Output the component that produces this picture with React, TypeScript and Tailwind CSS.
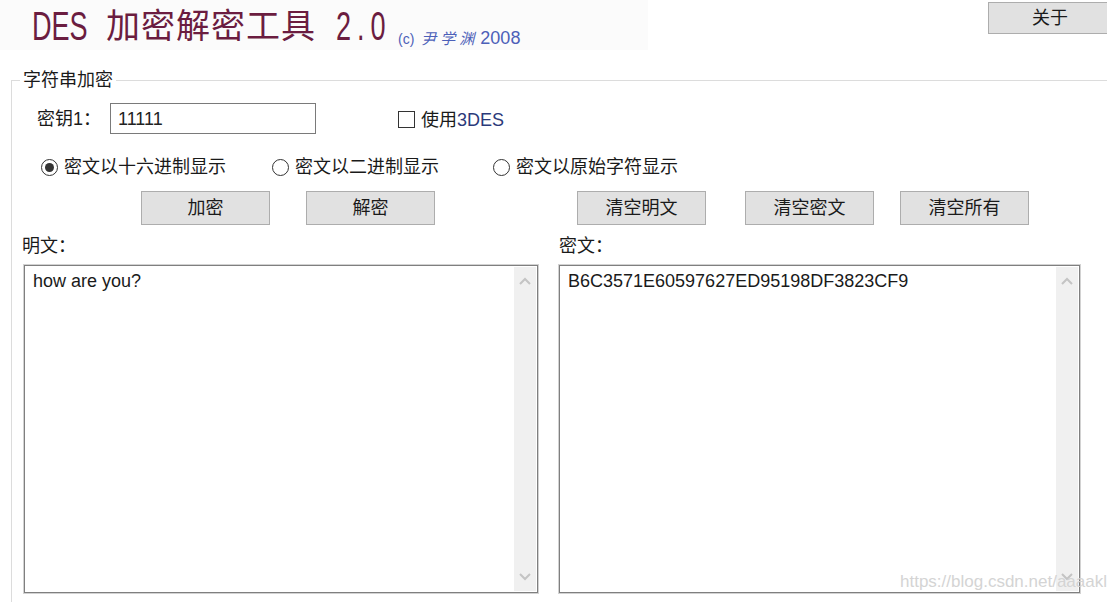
import React from "react";

const F = '"Liberation Sans", "Noto Sans CJK SC", sans-serif';

function Btn({ children, className = "" }: { children: React.ReactNode; className?: string }) {
  return (
    <div
      className={
        "h-[34px] w-[129px] flex items-center justify-center border border-[#adadad] bg-[#e1e1e1] text-[18px] text-[#1a1a1a] " +
        className
      }
    >
      {children}
    </div>
  );
}

function Radio({ checked, label, className = "" }: { checked?: boolean; label: string; className?: string }) {
  return (
    <div className={"flex items-center " + className}>
      <span className="w-[17px] h-[17px] shrink-0 rounded-full border border-[#333] bg-white flex items-center justify-center">
        {checked && <span className="w-[9px] h-[9px] rounded-full bg-[#333]" />}
      </span>
      <span className="ml-[6px] text-[18px] text-[#1a1a1a]">{label}</span>
    </div>
  );
}

function Chevron({ up }: { up?: boolean }) {
  return (
    <svg width="12" height="8" viewBox="0 0 12 8">
      <path
        d={up ? "M1 7 L6 2 L11 7" : "M1 1 L6 6 L11 1"}
        fill="none"
        stroke="#c4c4c4"
        strokeWidth="2"
      />
    </svg>
  );
}

function TextBox({ text, className = "" }: { text: string; className?: string }) {
  return (
    <div
      className={
        "h-[328px] border border-[#7f7f7f] outline outline-1 outline-[#d2d2d2] bg-white flex " + className
      }
    >
      <div className="flex-1 pl-[8px] pt-[3px] text-[18px] leading-[24px] text-[#1a1a1a]">{text}</div>
      <div className="w-[22px] mr-[1px] my-[1px] bg-[#f0f0f0] flex flex-col items-center justify-between py-[10px]">
        <Chevron up />
        <Chevron />
      </div>
    </div>
  );
}

export default function App() {
  return (
    <div className="w-[1107px] h-[602px] bg-white relative overflow-hidden" style={{ fontFamily: F }}>
      {/* header */}
      <div className="flex h-[50px]">
        <div className="w-[648px] h-[50px] bg-[#fbfbfb] flex items-end pl-[32px] pb-[4px]">
          <span className="inline-block w-[56px] h-[44px] relative shrink-0">
            <span
              className="absolute left-0 bottom-[-4px] origin-left scale-x-[0.66] text-[41px] leading-[48px] text-[#6b1d40] whitespace-nowrap"
              style={{ fontFamily: '"Liberation Sans", sans-serif' }}
            >
              DES
            </span>
          </span>
          <span
            className="ml-[18px] text-[34px] leading-[44px] tracking-[1px] text-[#6b1d40] whitespace-nowrap"
            style={{ fontFamily: '"Noto Sans CJK SC", sans-serif' }}
          >
            加密解密工具
          </span>
          <span className="inline-block w-[62px] h-[44px] relative ml-[20px] shrink-0">
            <span
              className="absolute left-0 bottom-[-4px] origin-left scale-x-[0.66] text-[41px] leading-[48px] text-[#6b1d40] whitespace-nowrap tracking-[9px]"
              style={{ fontFamily: '"Liberation Sans", sans-serif' }}
            >
              2.0
            </span>
          </span>
          <span className="mb-[-6px] text-[#4c60b8] whitespace-nowrap flex items-baseline">
            <span className="text-[14px]">(c)</span>
            <span
              className="ml-[7px] text-[15px] italic tracking-[4px]"
              style={{ fontFamily: '"Noto Sans CJK SC", sans-serif' }}
            >
              尹学渊
            </span>
            <span className="ml-[2px] text-[18px]">2008</span>
          </span>
        </div>
        <div className="ml-auto mt-[2px] mr-[-5px] h-[32px] w-[124px] border border-[#adadad] bg-[#e1e1e1] flex items-center justify-center text-[18px] text-[#1a1a1a]">
          关于
        </div>
      </div>

      {/* group box */}
      <fieldset className="ml-[11px] mt-[18px] border-t border-l border-[#dcdcdc] h-[560px] min-w-0">
        <legend className="ml-[8px] px-[3px] text-[18px] leading-[24px] text-[#1a1a1a]">字符串加密</legend>

        {/* row 1 */}
        <div className="flex items-center h-[31px] mt-[11px] pl-[25px]">
          <span className="w-[73px] pt-[2px] text-[18px] text-[#1a1a1a]">密钥1：</span>
          <div className="w-[206px] h-[31px] border border-[#7a7a7a] bg-white flex items-center pl-[7px] pt-[2px] text-[18px] text-[#222]">
            11111
          </div>
          <span className="ml-[82px] mt-[2px] w-[17px] h-[17px] border border-[#333] bg-white" />
          <span className="ml-[6px] pt-[4px] text-[18px] text-[#1a1a1a]">
            使用<span className="text-[#2b3a7a]">3DES</span>
          </span>
        </div>

        {/* row 2 */}
        <div className="flex items-center h-[24px] mt-[21px] pl-[29px]">
          <Radio checked label="密文以十六进制显示" className="w-[231px]" />
          <Radio label="密文以二进制显示" className="w-[221px]" />
          <Radio label="密文以原始字符显示" />
        </div>

        {/* row 3 */}
        <div className="flex h-[34px] mt-[12px] pl-[129px]">
          <Btn>加密</Btn>
          <Btn className="ml-[36px]">解密</Btn>
          <Btn className="ml-[142px]">清空明文</Btn>
          <Btn className="ml-[39px]">清空密文</Btn>
          <Btn className="ml-[26px]">清空所有</Btn>
        </div>

        {/* row 4 labels */}
        <div className="flex h-[24px] mt-[9px] text-[18px] leading-[24px] text-[#1a1a1a]">
          <span className="ml-[10px] w-[537px]">明文：</span>
          <span>密文：</span>
        </div>

        {/* text areas */}
        <div className="flex mt-[7px]">
          <TextBox text="how are you?" className="ml-[12px] w-[514px]" />
          <TextBox text="B6C3571E60597627ED95198DF3823CF9" className="ml-[21px] w-[521px]" />
        </div>
      </fieldset>

      <div
        className="absolute right-[0px] bottom-[8px] text-[17px] text-[#d4d4d4] whitespace-nowrap"
        style={{ fontFamily: '"Liberation Sans Narrow", "Liberation Sans", sans-serif' }}
      >
        https://blog.csdn.net/aaaakl
      </div>
    </div>
  );
}
